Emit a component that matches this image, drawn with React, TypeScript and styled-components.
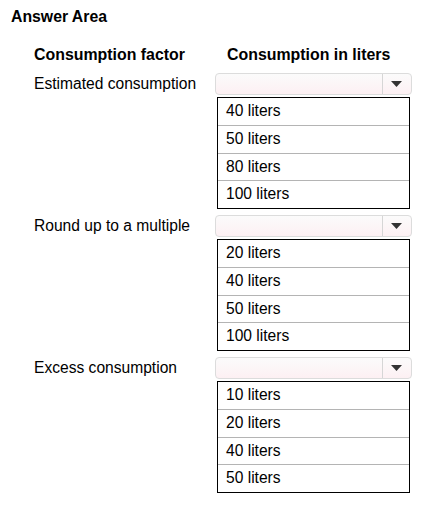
import React from "react";
import styled, { createGlobalStyle } from "styled-components";

const Global = createGlobalStyle`
  html, body { margin: 0; padding: 0; background: #fff; }
  body { font-family: "Liberation Sans", Arial, sans-serif; color: #000; }
`;

const Page = styled.div`
  padding: 8px 0 0 11px;
  width: 437px;
  height: 519px;
  box-sizing: border-box;
`;

const Title = styled.div`
  font-size: 15.8px;
  font-weight: bold;
  line-height: 18px;
  height: 18px;
`;

const Table = styled.div`
  margin-top: 20px;
  padding-left: 23px;
  display: grid;
  grid-template-columns: 181px 197px;
  row-gap: 6px;
`;

const Header = styled.div<{ $indent?: boolean }>`
  font-size: 15.9px;
  font-weight: bold;
  line-height: 18px;
  height: 18px;
  margin-bottom: 3px;
  padding-left: ${(p) => (p.$indent ? "12px" : "0")};
  white-space: nowrap;
`;

const Label = styled.div`
  font-size: 15.6px;
  line-height: 22px;
  height: 22px;
  white-space: nowrap;
`;

const Block = styled.div`
  display: flex;
  flex-direction: column;
  gap: 2px;
`;

const Select = styled.div`
  height: 22px;
  box-sizing: border-box;
  border: 1px solid #dcdcdc;
  border-radius: 4px;
  background: linear-gradient(#fbfbfb, #fdf0f3);
  display: flex;
  justify-content: flex-end;
`;

const Toggle = styled.div`
  width: 26px;
  border-left: 1px solid #d6d6d6;
  display: flex;
  align-items: center;
  justify-content: center;
  padding-right: 2px;
`;

const List = styled.div`
  margin: 0 2px;
  border: 1px solid #000;
  display: flex;
  flex-direction: column;
`;

const Option = styled.div<{ $first?: boolean }>`
  height: 26.75px;
  line-height: 26.75px;
  padding-left: 8px;
  font-size: 15.6px;
  border-top: ${(p) => (p.$first ? "none" : "1px solid #b4b4b4")};
`;

const Arrow = () => (
  <svg width="11" height="6" viewBox="0 0 11 6">
    <path d="M0 0 H11 L5.5 6 Z" fill="#333" />
  </svg>
);

const rows = [
  { label: "Estimated consumption", options: ["40 liters", "50 liters", "80 liters", "100 liters"] },
  { label: "Round up to a multiple", options: ["20 liters", "40 liters", "50 liters", "100 liters"] },
  { label: "Excess consumption", options: ["10 liters", "20 liters", "40 liters", "50 liters"] },
];

export default function App() {
  return (
    <>
      <Global />
      <Page>
        <Title>Answer Area</Title>
        <Table>
          <Header>Consumption factor</Header>
          <Header $indent>Consumption in liters</Header>
          {rows.map((r) => (
            <React.Fragment key={r.label}>
              <Label>{r.label}</Label>
              <Block>
                <Select>
                  <Toggle>
                    <Arrow />
                  </Toggle>
                </Select>
                <List>
                  {r.options.map((o, i) => (
                    <Option key={o} $first={i === 0}>
                      {o}
                    </Option>
                  ))}
                </List>
              </Block>
            </React.Fragment>
          ))}
        </Table>
      </Page>
    </>
  );
}
